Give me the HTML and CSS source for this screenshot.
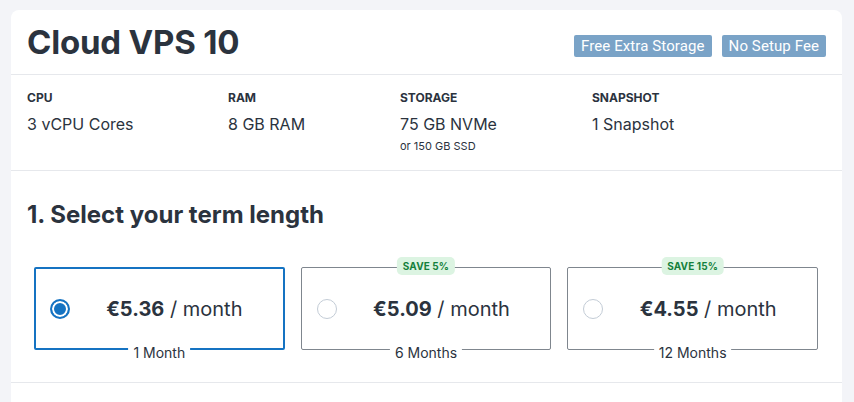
FILE: index.html
```html
<!DOCTYPE html>
<html>
<head>
<meta charset="utf-8">
<link rel="stylesheet" href="styles.css">
</head>
<body>
<div class="card">
  <div class="header">
    <h1 class="title">Cloud VPS 10</h1>
    <div class="badges">
      <span class="badge">Free Extra Storage</span>
      <span class="badge">No Setup Fee</span>
    </div>
  </div>
  <div class="specs">
    <div class="spec">
      <div class="spec-label">CPU</div>
      <div class="spec-value">3 vCPU Cores</div>
    </div>
    <div class="spec">
      <div class="spec-label">RAM</div>
      <div class="spec-value">8 GB RAM</div>
    </div>
    <div class="spec">
      <div class="spec-label">Storage</div>
      <div class="spec-value">75 GB NVMe</div>
      <div class="spec-note">or 150 GB SSD</div>
    </div>
    <div class="spec">
      <div class="spec-label">Snapshot</div>
      <div class="spec-value">1 Snapshot</div>
    </div>
  </div>
  <div class="term">
    <h2 class="term-title">1. Select your term length</h2>
    <div class="options">
      <div class="option selected">
        <span class="radio"></span>
        <span class="price"><b>€5.36</b> / month</span>
        <span class="period">1 Month</span>
      </div>
      <div class="option">
        <span class="save">SAVE 5%</span>
        <span class="radio"></span>
        <span class="price"><b>€5.09</b> / month</span>
        <span class="period">6 Months</span>
      </div>
      <div class="option">
        <span class="save">SAVE 15%</span>
        <span class="radio"></span>
        <span class="price"><b>€4.55</b> / month</span>
        <span class="period">12 Months</span>
      </div>
    </div>
  </div>
  <div class="next"></div>
</div>
</body>
</html>
```
FILE: styles.css
```css
* { box-sizing: border-box; }
html, body { margin: 0; padding: 0; }
body {
  background: #f3f4f8;
  font-family: Inter, "Noto Sans", sans-serif;
  color: #2b333e;
  overflow: hidden;
}
.card {
  margin: 10px 12px 0 11px;
  background: #fff;
  border-radius: 8px 8px 0 0;
}
.header {
  display: flex;
  align-items: center;
  justify-content: space-between;
  height: 65px;
  padding: 0 16px;
  border-bottom: 1px solid #e6e8ec;
}
.title {
  margin: 0;
  font-size: 33px;
  font-weight: 700;
  line-height: 40px;
  letter-spacing: -0.2px;
}
.badges {
  display: flex;
  gap: 10px;
  margin-top: 8px;
}
.badge {
  font-family: Roboto, "Liberation Sans", sans-serif;
  font-size: 15px;
  letter-spacing: 0.1px;
  line-height: 22px;
  height: 22px;
  padding: 0 7px;
  color: #fff;
  background: #7aa3c7;
  border-radius: 2px;
}
.specs {
  display: grid;
  grid-template-columns: 201px 172px 192px 1fr;
  padding: 15px 16px 16px;
  border-bottom: 1px solid #e6e8ec;
  height: 96px;
}
.spec-label {
  font-size: 12px;
  font-weight: 700;
  line-height: 16px;
  text-transform: uppercase;
  margin-bottom: 6px;
}
.spec-value {
  font-size: 16px;
  line-height: 24px;
}
.spec-note {
  font-size: 11px;
  line-height: 16px;
  margin-top: 2px;
}
.term {
  padding: 28px 16px 0;
  height: 212px;
  border-bottom: 1px solid #e6e8ec;
}
.term-title {
  margin: 0;
  font-size: 24px;
  font-weight: 700;
  line-height: 32px;
}
.options {
  display: grid;
  grid-template-columns: repeat(3, 1fr);
  gap: 16px;
  margin: 36px 8px 0 7px;
}
.option {
  position: relative;
  display: flex;
  align-items: center;
  height: 83px;
  padding: 0 4px 0 15px;
  border: 1px solid #7f868e;
  border-radius: 2px;
}
.option.selected {
  border: 2px solid #1573c2;
  padding-left: 14px;
}
.radio {
  flex: none;
  width: 20px;
  height: 20px;
  border-radius: 50%;
  border: 1px solid #c3ccd6;
  background: #fff;
}
.selected .radio {
  border: 2px solid #1573c2;
  box-shadow: inset 0 0 0 2px #fff;
  background: #1573c2;
}
.price {
  flex: 1;
  text-align: center;
  font-size: 20px;
  line-height: 28px;
  color: #2b333e;
}
.price b { font-weight: 700; }
.period {
  position: absolute;
  left: 50%;
  bottom: -12px;
  transform: translateX(-50%);
  padding: 0 5px;
  background: #fff;
  font-size: 14px;
  line-height: 16px;
  white-space: nowrap;
}
.selected .period { bottom: -13px; }
.save {
  position: absolute;
  left: 50%;
  top: -11px;
  transform: translateX(-50%);
  height: 18px;
  padding: 0 6px;
  background: #dcf4e2;
  color: #14803c;
  border-radius: 5px;
  font-size: 10px;
  font-weight: 700;
  line-height: 18px;
  letter-spacing: 0.1px;
  white-space: nowrap;
}
.next {
  height: 40px;
}
```
